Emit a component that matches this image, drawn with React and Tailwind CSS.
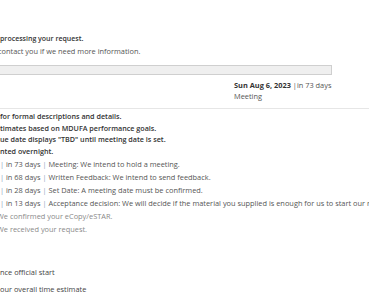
export default function App() {
  const upcoming = [
    { days: "73", cut: 6, text: "Meeting: We intend to hold a meeting." },
    { days: "68", cut: 6, text: "Written Feedback: We intend to send feedback." },
    { days: "28", cut: 3, text: "Set Date: A meeting date must be confirmed." },
    {
      days: "13",
      cut: 6,
      text: "Acceptance decision: We will decide if the material you supplied is enough for us to start our review.",
    },
  ];

  return (
    <div className="w-[369px] h-[308px] overflow-hidden bg-white font-['Open_Sans',sans-serif] text-[7.4px] text-[#444]">
      <div className="pt-[32px]">
        {/* status */}
        <p className="leading-[13px] text-[7px] font-semibold text-[#333] whitespace-nowrap">processing your request.</p>
        <p className="leading-[13px] text-[#555] whitespace-nowrap -ml-[2px]">contact you if we need more information.</p>

        {/* progress */}
        <div className="mt-[7px] -ml-[10px] w-[342px] h-[10px] border border-[#cfcfcf] bg-[#efefef]" />

        <div className="pl-[234px] mt-[5px] text-[#555]">
          <p className="leading-[11px] whitespace-nowrap">
            <span className="font-bold text-[#333]">Sun Aug 6, 2023</span> |in 73 days
          </p>
          <p className="leading-[11px]">Meeting</p>
        </div>

        <div className="mt-[6px] border-t border-[#e6e6e6]" />

        {/* notes */}
        <div className="mt-[2px] font-semibold text-[7.2px] text-[#333] leading-[11.5px] whitespace-nowrap">
          <p>for formal descriptions and details.</p>
          <p>timates based on MDUFA performance goals.</p>
          <p>ue date displays "TBD" until meeting date is set.</p>
          <p>nted overnight.</p>
        </div>

        {/* timeline */}
        <ul className="mt-[1px] leading-[13px] whitespace-nowrap">
          {upcoming.map((u) => (
            <li key={u.days} className="-ml-[40px] text-[#555]">
              <span className="inline-block w-[40px] text-right" style={{ paddingRight: u.cut }}>
                3
              </span>
              <span className="text-[#8aa0b8]">|</span> in {u.days} days <span className="text-[#8aa0b8]">|</span> {u.text}
            </li>
          ))}
          <li className="-ml-[3px] text-[#8a8a8a]">We confirmed your eCopy/eSTAR.</li>
          <li className="-ml-[3px] text-[#8a8a8a]">We received your request.</li>
        </ul>

        <p className="mt-[30px] leading-[13px] whitespace-nowrap">nce official start</p>
        <p className="mt-[4px] leading-[13px] whitespace-nowrap">our overall time estimate</p>
      </div>
    </div>
  );
}
